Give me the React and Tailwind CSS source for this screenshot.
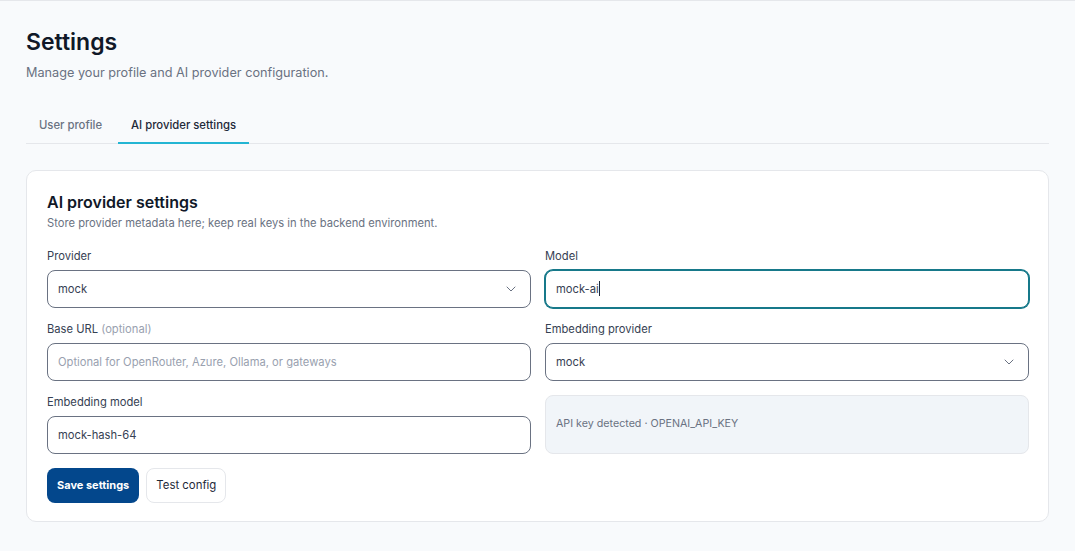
import { ChevronDown } from 'lucide-react'

const TABS = [
  { id: 'profile', label: 'User profile' },
  { id: 'ai', label: 'AI provider settings' },
]

function FieldLabel({ children, hint }) {
  return (
    <label className="block text-[11.2px] leading-[14px] text-gray-700 mb-[7px]">
      {children}
      {hint && <span className="text-gray-400"> {hint}</span>}
    </label>
  )
}

function SelectField({ label, value }) {
  return (
    <div>
      <FieldLabel>{label}</FieldLabel>
      <div className="relative">
        <select
          defaultValue={value}
          className="w-full h-[38px] appearance-none rounded-lg border border-gray-500 bg-white pl-[10px] pr-8 text-[11.2px] text-gray-700 outline-none"
        >
          <option value={value}>{value}</option>
        </select>
        <ChevronDown
          size={16}
          strokeWidth={1.5}
          className="pointer-events-none absolute right-3 top-1/2 -translate-y-1/2 text-gray-500"
        />
      </div>
    </div>
  )
}

function TextField({ label, hint, value, placeholder }) {
  return (
    <div>
      <FieldLabel hint={hint}>{label}</FieldLabel>
      <input
        defaultValue={value}
        placeholder={placeholder}
        className="w-full h-[38px] rounded-lg border border-gray-500 bg-white px-[10px] text-[11.2px] text-gray-700 placeholder:text-gray-400 outline-none"
      />
    </div>
  )
}

// focused field — drawn with its caret so the shot shows the active state
function FocusedField({ label, value }) {
  return (
    <div>
      <FieldLabel>{label}</FieldLabel>
      <div className="flex items-center w-full h-[38px] rounded-lg border border-[#17798a] ring-1 ring-[#17798a] bg-white px-[10px] text-[11.2px] text-gray-700">
        <span>{value}</span>
        <span className="w-px h-[15px] bg-gray-800" />
      </div>
    </div>
  )
}

export default function App() {
  return (
    <div className="min-h-screen bg-[#f8fafc] border-t border-gray-200 pl-[26px] pr-[26px] pt-[25px] pb-7 font-['Inter',sans-serif]">
      <h1 className="text-[23px] leading-8 font-semibold text-gray-900">Settings</h1>
      <p className="mt-[5px] text-[12.7px] leading-5 text-gray-500">
        Manage your profile and AI provider configuration.
      </p>

      <div className="mt-[25px] flex gap-[3px] border-b border-gray-200">
        {TABS.map((t) => {
          const active = t.id === 'ai'
          return (
            <button
              key={t.id}
              className={
                active
                  ? 'px-[13px] pt-[9px] pb-[8px] text-[11.3px] font-medium text-gray-800 border-b-2 border-[#23b5d3] -mb-px'
                  : 'px-[13px] pt-[9px] pb-[8px] text-[11.3px] font-medium text-gray-500 border-b-2 border-transparent -mb-px'
              }
            >
              {t.label}
            </button>
          )
        })}
      </div>

      <section className="mt-[26px] rounded-[10px] border border-gray-200 bg-white pl-5 pr-[19px] pt-[19px] pb-[18px]">
        <h2 className="text-base leading-6 font-semibold text-gray-900">AI provider settings</h2>
        <p className="mt-px text-[11.2px] leading-4 text-gray-500">
          Store provider metadata here; keep real keys in the backend environment.
        </p>

        <div className="mt-[18px] grid grid-cols-2 gap-x-[14px] gap-y-[14px]">
          <SelectField label="Provider" value="mock" />
          <FocusedField label="Model" value="mock-ai" />
          <TextField
            label="Base URL"
            hint="(optional)"
            placeholder="Optional for OpenRouter, Azure, Ollama, or gateways"
          />
          <SelectField label="Embedding provider" value="mock" />
          <TextField label="Embedding model" value="mock-hash-64" />
          <div className="flex items-center rounded-lg border border-gray-200 bg-[#f1f5f9] px-[10px] text-[10.7px] text-gray-500">
            API key detected · OPENAI_API_KEY
          </div>
        </div>

        <div className="mt-[14px] flex gap-[7px]">
          <button className="h-[35px] rounded-lg bg-[#03478c] px-[10px] text-[11px] font-bold text-white">
            Save settings
          </button>
          <button className="h-[35px] rounded-lg border border-gray-200 bg-white px-[9px] text-[11.4px] text-gray-800">
            Test config
          </button>
        </div>
      </section>
    </div>
  )
}
